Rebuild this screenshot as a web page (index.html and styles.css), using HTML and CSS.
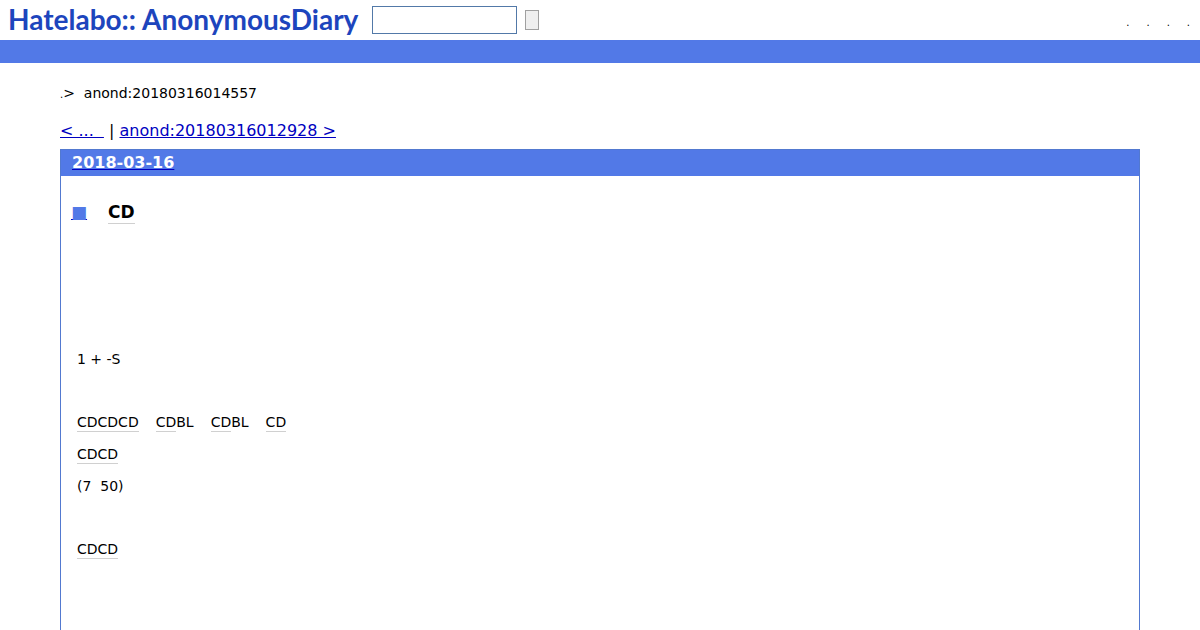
FILE: index.html
```html
<!DOCTYPE html>
<html lang="ja">
<head>
<meta charset="utf-8">
<title>Hatelabo::AnonymousDiary</title>
<link rel="stylesheet" href="styles.css">
</head>
<body>
<header class="header">
  <a class="logo" href="#"><span>Hatelabo::</span><span>AnonymousDiary</span></a>
  <form class="search">
    <input class="search-box" type="text" aria-label="Search">
    <button class="search-button" type="button" aria-label="Submit search"></button>
  </form>
  <nav class="menu">
    <a href="#">.</a>
    <a href="#">.</a>
    <a href="#">.</a>
    <a href="#">.</a>
  </nav>
</header>
<div class="bar"></div>
<main class="content">
  <div class="breadcrumb"><a href="#">.</a><span>&gt;&nbsp; anond:20180316014557</span></div>
  <nav class="pager"><a href="#">&lt; ...&nbsp; </a>&nbsp;<span class="divider">|</span> <a href="#">anond:20180316012928 &gt;</a></nav>
  <article class="day">
    <h2 class="date"><a href="#"><span>2018-03-16</span></a></h2>
    <div class="body">
      <h3 class="title"><a class="anchor" href="#"><span>■</span></a><a class="keyword" href="#">CD</a></h3>
      <div class="section">
        <div class="group"><p>1 + -S</p></div>
        <div class="group">
          <p class="items"><span><a class="keyword" href="#">CDCDCD</a></span><span><a class="keyword" href="#">CD</a>BL</span><span><a class="keyword" href="#">CD</a>BL</span><span><a class="keyword" href="#">CD</a></span></p>
          <p><a class="keyword" href="#">CDCD</a></p>
          <p>(7&nbsp; 50)</p>
        </div>
        <div class="group"><p><a class="keyword" href="#">CDCD</a></p></div>
      </div>
    </div>
  </article>
</main>
</body>
</html>
```
FILE: styles.css
```css
* { box-sizing: border-box; }
body {
  margin: 0;
  background: #fff;
  color: #000;
  font-family: "DejaVu Sans", sans-serif;
  font-size: 14px;
}
h2, h3, p { margin: 0; }
.header {
  display: flex;
  align-items: center;
  height: 40px;
  padding: 0 10px 0 8px;
}
.logo {
  display: flex;
  gap: 6px;
  width: 364px;
  color: #1d45bd;
  font-family: Lato, sans-serif;
  font-size: 28px;
  font-weight: 700;
  line-height: 38px;
  padding-bottom: 2px;
  text-decoration: none;
}
.search { display: flex; align-items: center; gap: 8px; }
.search-box {
  width: 145px;
  height: 28px;
  padding: 2px 4px;
  border: 1px solid #5279a8;
  background: #fff;
}
.search-button {
  width: 14px;
  height: 20px;
  padding: 0;
  border: 1px solid #a0a0a0;
  background: #efefef;
}
.menu { display: flex; gap: 17px; margin-left: auto; padding-top: 4px; }
.menu a, .breadcrumb a {
  color: #000;
  font-size: 10px;
  text-decoration: none;
}
.bar { height: 23px; background: #5279e7; }
.content { padding: 20px 60px 0; }
.breadcrumb { display: flex; align-items: baseline; line-height: 20px; }
.pager { margin-top: 16px; font-size: 16px; line-height: 20px; }
.pager a { color: #0000c0; }
.day {
  min-height: calc(100vh - 149px);
  margin-top: 8px;
  border: 1px solid #5279d0;
  border-bottom: 0;
}
.date {
  padding: 0 11px;
  background: #5279e7;
  font-size: 16px;
  line-height: 26px;
}
.date a { color: #0000c0; }
.date span { color: #fff; }
.body { padding: 24px 10px 0; }
.title {
  display: flex;
  align-items: baseline;
  gap: 21px;
  font-size: 17px;
  line-height: 24px;
}
.anchor { color: #0000c0; }
.anchor span { color: #5279e7; }
.keyword {
  padding-bottom: 1px;
  border-bottom: 1px solid #d0d0d0;
  color: #000;
  text-decoration: none;
}
.title .keyword { padding-bottom: 0; line-height: 22px; }
.section { padding: 119px 6px 0; line-height: 32px; }
.group + .group { margin-top: 31px; }
.items { display: flex; gap: 17px; }
```
